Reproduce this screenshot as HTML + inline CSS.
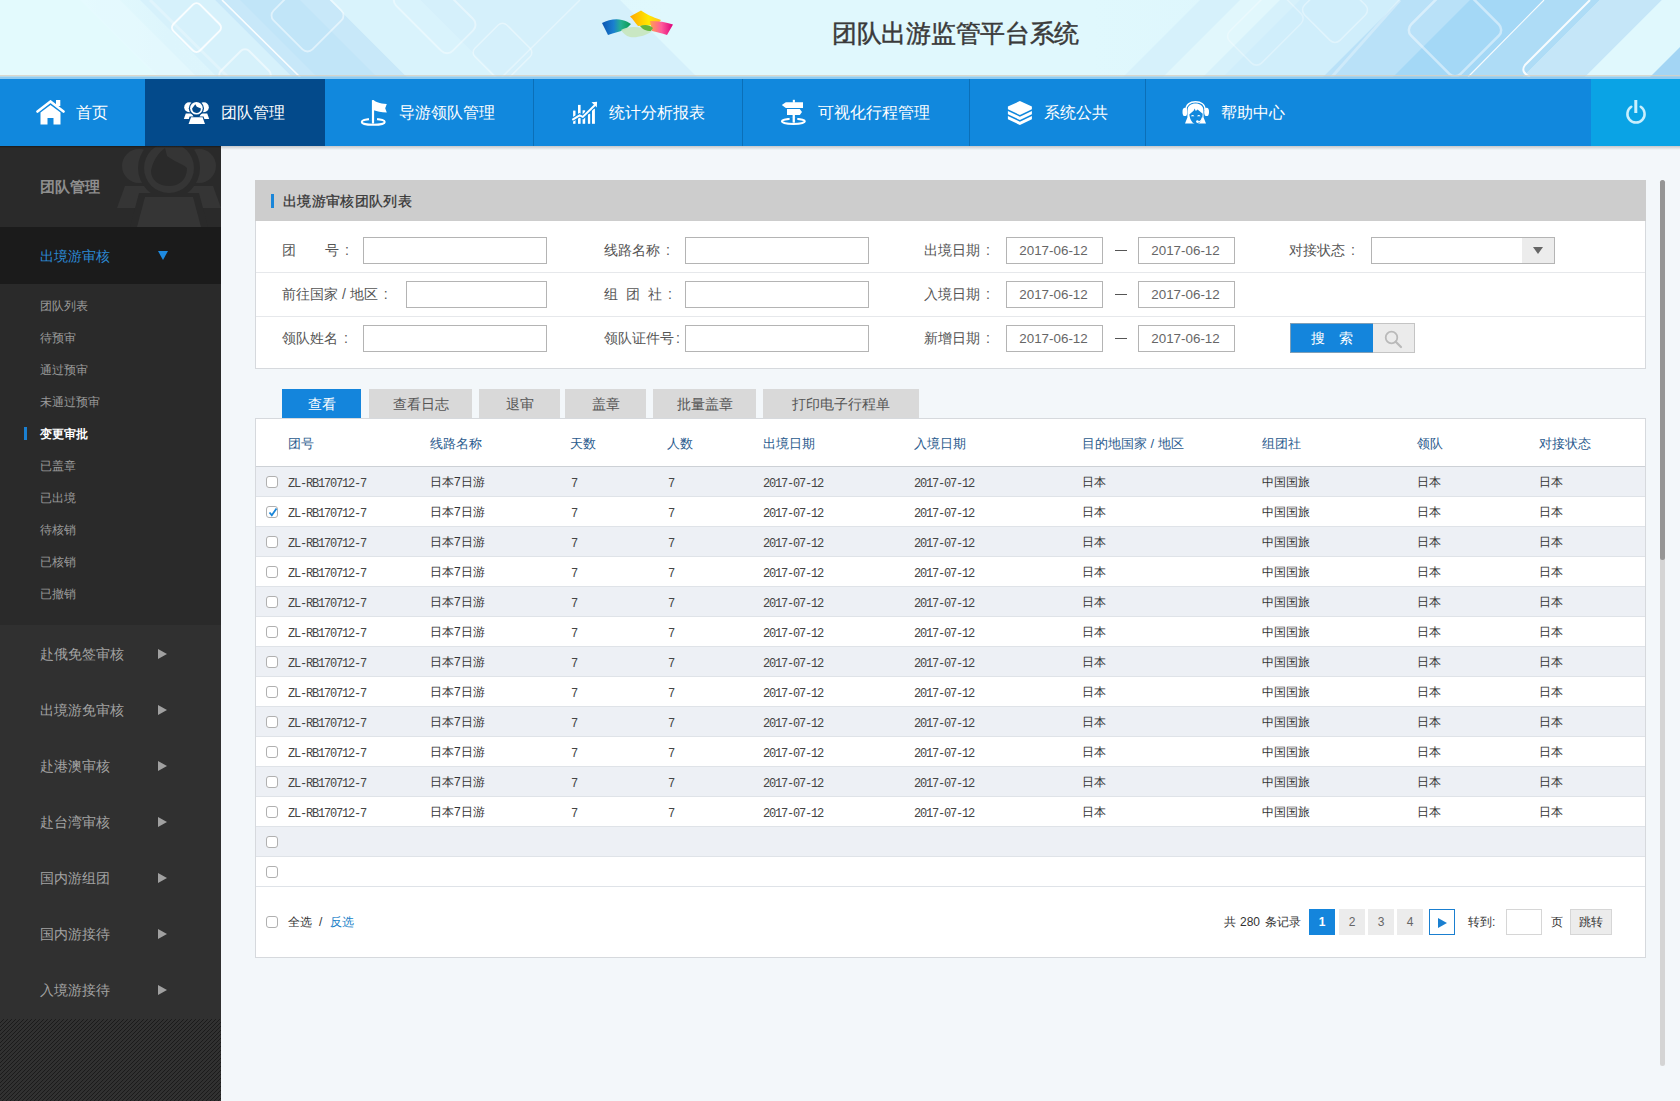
<!DOCTYPE html>
<html><head><meta charset="utf-8">
<style>
*{box-sizing:border-box;margin:0;padding:0}
html,body{width:1680px;height:1101px;overflow:hidden}
body{position:relative;background:#f3f7fa;font-family:"Liberation Sans",sans-serif;color:#555}
.a{position:absolute}
#hdr{left:0;top:0;width:1680px;height:79px;overflow:hidden;background:#e2f8fd}
#nav{left:0;top:79px;width:1680px;height:67px;background:#1188dd;z-index:2}
.ni{position:absolute;top:0;height:67px;color:#fff;font-size:16px;line-height:67px}
.ni .t{position:absolute;top:0;white-space:nowrap}
.sep{position:absolute;top:0;width:1px;height:67px;background:#0b6fb8}
#side{left:0;top:146px;width:221px;height:955px;background:#303030;overflow:hidden}
.sg{position:absolute;left:40px;font-size:14px;color:#a3a3a3;white-space:nowrap}
.tri{position:absolute;left:158px;width:0;height:0;border-top:5px solid transparent;border-bottom:5px solid transparent;border-left:9px solid #a0a0a0}
.si{position:absolute;left:40px;font-size:12px;color:#9a9a9a;white-space:nowrap;line-height:16px}
#panel{left:255px;top:180px;width:1391px;height:189px;background:#fff;box-shadow:inset 1px 0 0 #d6d9dd,inset -1px 0 0 #d6d9dd,inset 0 -1px 0 #d6d9dd}
.lbl{position:absolute;font-size:14px;color:#555;white-space:nowrap;line-height:16px}
.inp{position:absolute;height:27px;border:1px solid #b4b4b4;background:#fff}
.dt{position:absolute;height:27px;width:97px;border:1px solid #b4b4b4;background:#fff;font-size:13.4px;color:#666;text-align:center;line-height:25px;text-indent:-2px}
.tab{position:absolute;top:389px;height:29px;background:#d9d9d9;color:#555;font-size:14px;text-align:center;line-height:30px}
#tbl{left:255px;top:418px;width:1391px;height:540px;background:#fff;border:1px solid #d6d9dd}
.th{position:absolute;top:17px;font-size:13px;color:#2b5b8e;white-space:nowrap;line-height:16px}
.row{position:absolute;left:0;width:1389px;height:30px;border-bottom:1px solid #dfe3e8}
.row.g{background:#edf0f5}
.cb{position:absolute;left:10px;top:9px;width:12px;height:12px;border:1px solid #b0b0b0;border-radius:3px;background:#fff}
.c{position:absolute;top:0;line-height:30px;font-size:12px;color:#333;white-space:nowrap}
.pg{width:26px;height:26px;background:#ececec;color:#666;font-size:12px;line-height:26px;text-align:center}
.m{font-family:"Liberation Mono",monospace;font-size:12px;letter-spacing:-1.2px;color:#444}
.c.m{top:2px}
</style></head><body>

<div id="hdr" class="a">
<svg class="a" style="left:0;top:0" width="1680" height="79" viewBox="0 0 1680 79">
<defs><linearGradient id="hbg" x1="0" y1="0" x2="1" y2="0"><stop offset="0" stop-color="#e3fafd"/><stop offset="0.05" stop-color="#e3fafd"/><stop offset="0.1" stop-color="#ddf5fc"/><stop offset="0.4" stop-color="#e0f8fd"/><stop offset="0.65" stop-color="#e0f8fd"/><stop offset="0.8" stop-color="#dcf5fc"/><stop offset="1" stop-color="#dcf5fc"/></linearGradient></defs><rect width="1680" height="79" fill="url(#hbg)"/>
<!-- left bands (\ direction) -->
<polygon points="0,0 82,0 161,79 0,79" fill="#e3fafd"/>
<polygon points="140,0 215,0 294,79 219,79" fill="#d6f1fb"/>
<polygon points="215,0 330,0 409,79 294,79" fill="#c8e8f9"/>
<polygon points="240,0 300,0 379,79 319,79" fill="#bfe3f8" opacity="0.8"/>
<polygon points="330,0 420,0 499,79 409,79" fill="#d9f3fc"/>
<polygon points="420,0 620,0 699,79 499,79" fill="#d5f0fb"/>
<polygon points="80,0 120,0 199,79 159,79" fill="#e6fafd" opacity="0.7"/>
<line x1="222" y1="0" x2="302" y2="79" stroke="#fff" stroke-width="1.6" opacity="0.9"/>
<line x1="150" y1="0" x2="230" y2="79" stroke="#fff" stroke-width="3" opacity="0.25"/>
<rect x="177.8" y="8.8" width="37.5" height="37.5" rx="5" transform="rotate(45 196.5 27.5)" fill="none" stroke="#fff" stroke-width="2" opacity="0.85"/>
<rect x="280" y="-12" width="55" height="55" rx="7" transform="rotate(45 307.5 15.5)" fill="none" stroke="#fff" stroke-width="1.8" opacity="0.5"/>
<rect x="225" y="55" width="40" height="40" rx="6" transform="rotate(45 245 75)" fill="none" stroke="#fff" stroke-width="2" opacity="0.5"/>
<rect x="395" y="-10" width="80" height="45" rx="8" transform="rotate(45 435 12)" fill="none" stroke="#fff" stroke-width="2" opacity="0.4"/>
<rect x="480" y="30" width="45" height="45" rx="6" transform="rotate(45 502.5 52.5)" fill="none" stroke="#fff" stroke-width="1.5" opacity="0.4"/>
<line x1="580" y1="0" x2="500" y2="79" stroke="#fff" stroke-width="1.5" opacity="0.35"/>
<!-- right bands (/ direction) -->
<polygon points="1200,0 1662,0 1583,79 1121,79" fill="#d6f1fb"/>
<polygon points="1300,0 1400,0 1321,79 1221,79" fill="#d0eefb"/>
<polygon points="1400,0 1560,0 1481,79 1321,79" fill="#b9e1f8"/>
<polygon points="1470,0 1545,0 1466,79 1391,79" fill="#a4d8f6"/>
<polygon points="1545,0 1600,0 1521,79 1466,79" fill="#aedcf6"/>
<polygon points="1600,0 1662,0 1583,79 1521,79" fill="#c5e6f8"/>
<polygon points="1662,0 1680,0 1680,79 1583,79" fill="#e0f8fd"/>
<polygon points="1680,47 1680,79 1648,79" fill="#a3d5f4"/>
<polygon points="1240,0 1280,0 1201,79 1161,79" fill="#e4f9fd" opacity="0.8"/>
<line x1="1544" y1="0" x2="1468" y2="77" stroke="#fff" stroke-width="1.2" opacity="0.9"/>
<path d="M1590,0 L1525,65 Q1520,72 1530,77" fill="none" stroke="#fff" stroke-width="2" opacity="0.9"/>
<rect x="1420" y="-5" width="70" height="70" rx="8" transform="rotate(45 1455 30)" fill="none" stroke="#fff" stroke-width="2.5" opacity="0.45"/>
<rect x="1310" y="-15" width="50" height="50" rx="7" transform="rotate(45 1335 10)" fill="none" stroke="#fff" stroke-width="1.6" opacity="0.35"/>
<rect x="1230" y="5" width="70" height="45" rx="7" transform="rotate(-45 1265 27)" fill="none" stroke="#fff" stroke-width="1.6" opacity="0.3"/>
<line x1="1400" y1="0" x2="1330" y2="79" stroke="#fff" stroke-width="3" opacity="0.3"/>
<!-- bottom line -->
<rect x="0" y="75" width="1680" height="1.5" fill="#d8d0c0" opacity="0.8"/>
<rect x="0" y="76.5" width="1680" height="2.5" fill="#8ecbf2"/>
</svg>
<svg class="a" style="left:590px;top:5px" width="100" height="40" viewBox="0 0 100 40">
<defs>
<linearGradient id="lg1" x1="12" y1="0" x2="41" y2="0" gradientUnits="userSpaceOnUse"><stop offset="0" stop-color="#0b55b0"/><stop offset="0.4" stop-color="#1a7fd0"/><stop offset="0.65" stop-color="#25b090"/><stop offset="1" stop-color="#0a9a50"/></linearGradient>
<linearGradient id="lg2" x1="40" y1="0" x2="71" y2="0" gradientUnits="userSpaceOnUse"><stop offset="0" stop-color="#ffa800"/><stop offset="0.6" stop-color="#ffe800"/><stop offset="1" stop-color="#ffc020"/></linearGradient>
<linearGradient id="lg3" x1="60" y1="0" x2="83" y2="0" gradientUnits="userSpaceOnUse"><stop offset="0" stop-color="#ffa050"/><stop offset="0.5" stop-color="#ff5a9a"/><stop offset="1" stop-color="#dc007a"/></linearGradient>
</defs>
<path d="M40,11.5 L51,5.5 C56,9 62,12 71,15 L67,20 C60,20 54,21 48,21 C45,18 43,14 40,11.5 Z" fill="url(#lg2)"/>
<path d="M60,16 C68,16 76,17 83,19.5 L77,30 C72,28 66,27 62,26 Z" fill="url(#lg3)"/>
<path d="M12,18 C18,15 26,13 32,15 C36,16 39,17.5 41,19 L35,25 C30,26 24,28 18,30 C16,26 14,22 12,18 Z" fill="url(#lg1)"/>
<path d="M31,25 C38,21 50,21 62,26 C56,31 46,33 40,32 C36,31 33,28 31,25 Z" fill="#c8e6c0" opacity="0.95"/>
<path d="M50,21 C55,19 60,20 63,23 L61,26 C56,26 52,24 50,21 Z" fill="#62b53a"/>
</svg>
<div class="a" style="left:832px;top:18px;font-size:25px;line-height:30px;color:#3a3a3a;white-space:nowrap;letter-spacing:-0.3px;-webkit-text-stroke:0.45px #3a3a3a">团队出游监管平台系统</div>
</div>

<div id="nav" class="a">
<div class="a" style="left:145px;top:0;width:180px;height:67px;background:#034a8b"></div>
<div class="a" style="left:1591px;top:0;width:89px;height:67px;background:#0aa3e5"></div>
<div class="sep" style="left:533px"></div>
<div class="sep" style="left:742px"></div>
<div class="sep" style="left:969px"></div>
<div class="sep" style="left:1145px"></div>
<!-- home -->
<svg class="a" style="left:36px;top:21px" width="30" height="26" viewBox="0 0 30 26">
<path d="M1.5,11.5 L14.5,1.5 L27.5,11.5" fill="none" stroke="#fff" stroke-width="2.6" stroke-linecap="round" stroke-linejoin="miter"/>
<rect x="20" y="0" width="4.3" height="6" fill="#fff"/>
<path d="M4.5,12.5 L14.5,5 L24.5,12.5 L24.5,24.5 L17.5,24.5 L17.5,18 L11.5,18 L11.5,24.5 L4.5,24.5 Z" fill="#fff"/>
</svg>
<div class="ni t" style="left:76px;top:0">首页</div>
<!-- team -->
<svg class="a" style="left:183px;top:23px" width="28" height="23" viewBox="0 0 28 23">
<circle cx="6.2" cy="5.3" r="5" fill="#fff"/>
<circle cx="20.8" cy="5.3" r="5" fill="#fff"/>
<path d="M2.8,11.6 L9.2,11.6 L11.2,17 L0.8,17 Z" fill="#fff"/>
<path d="M17.8,11.6 L24.2,11.6 L26.2,17 L15.8,17 Z" fill="#fff"/>
<circle cx="13.4" cy="6.3" r="7.6" fill="#034a8b"/>
<circle cx="13.4" cy="6.3" r="6.3" fill="#fff"/>
<path d="M9.1,6.6 L12.3,2.3 L13.8,4.8 C15.5,5.6 16.8,6 17.9,6.4 C17.9,9.3 16,10.9 13.5,10.9 C11,10.9 9.1,9.3 9.1,6.6 Z" fill="#034a8b"/>
<path d="M6.6,14.4 L20.6,14.4 L23,22.6 L4.2,22.6 Z" fill="#034a8b"/>
<path d="M8,15.3 L19.6,15.3 L22,22 L5.6,22 Z" fill="#fff"/>
</svg>
<div class="ni t" style="left:221px;top:0">团队管理</div>
<!-- flag -->
<svg class="a" style="left:359px;top:20px" width="30" height="28" viewBox="0 0 30 28">
<ellipse cx="14.25" cy="22.9" rx="11.5" ry="2.9" fill="none" stroke="#fff" stroke-width="2"/>
<rect x="10" y="19" width="8" height="2.6" fill="#1188dd"/>
<rect x="12.9" y="1.1" width="2.2" height="23.5" fill="#fff"/>
<path d="M14.8,1.3 C17,3.2 20,4.5 27.8,4.9 L26.2,9.3 L27.8,13.6 C22,13.2 18,12.6 14.8,11.3 Z" fill="#fff"/>
</svg>
<div class="ni t" style="left:399px;top:0">导游领队管理</div>
<!-- chart -->
<svg class="a" style="left:571px;top:22px" width="28" height="24" viewBox="0 0 28 24">
<rect x="2.1" y="9.6" width="2.4" height="13.2" fill="#fff"/>
<rect x="7" y="3.9" width="2.6" height="18.9" fill="#fff"/>
<rect x="11.6" y="9.3" width="2.6" height="13.5" fill="#fff"/>
<rect x="16.9" y="12.8" width="2.3" height="10" fill="#fff"/>
<rect x="21" y="7.7" width="2.9" height="15.1" fill="#fff"/>
<path d="M1.3,18.8 L8.6,14.3 L11.8,15.9 L24,4" fill="none" stroke="#1188dd" stroke-width="4.2"/>
<path d="M1.3,18.8 L8.6,14.3 L11.8,15.9 L24,4" fill="none" stroke="#fff" stroke-width="2"/>
<path d="M20.5,1.3 L26.1,0.8 L25.8,6.4 Z" fill="#fff"/>
</svg>
<div class="ni t" style="left:609px;top:0">统计分析报表</div>
<!-- signpost -->
<svg class="a" style="left:779px;top:20px" width="30" height="28" viewBox="0 0 30 28">
<ellipse cx="14.35" cy="22.3" rx="11.5" ry="2.6" fill="none" stroke="#fff" stroke-width="2"/>
<rect x="10.6" y="18.5" width="7.7" height="2.6" fill="#1188dd"/>
<rect x="13.8" y="0.8" width="2.1" height="3" fill="#fff"/>
<path d="M2.8,6.05 L6.8,3.2 L24,3.2 L24,8.9 L6.8,8.9 Z" fill="#fff"/>
<path d="M8,10.1 L20.8,10.1 L23,13 L20.8,15.9 L8,15.9 Z" fill="#fff"/>
<rect x="13.6" y="15.5" width="2.3" height="8.2" fill="#fff"/>
</svg>
<div class="ni t" style="left:818px;top:0">可视化行程管理</div>
<!-- layers -->
<svg class="a" style="left:1007px;top:22px" width="26" height="25" viewBox="0 0 26 25">
<path d="M12.9,0 L24.9,5.6 L24.9,8.3 L12.9,14 L0.9,8.3 L0.9,5.6 Z" fill="#fff"/>
<path d="M0.9,10 L12.9,15.7 L24.9,10 L24.9,13.3 L12.9,19 L0.9,13.3 Z" fill="#fff"/>
<path d="M0.9,15 L12.9,20.7 L24.9,15 L24.9,18.3 L12.9,24 L0.9,18.3 Z" fill="#fff"/>
</svg>
<div class="ni t" style="left:1044px;top:0">系统公共</div>
<!-- headset -->
<svg class="a" style="left:1181px;top:22px" width="29" height="25" viewBox="0 0 29 25">
<path d="M4.9,9 C4.9,3.5 9,0.8 14.5,0.8 C20,0.8 24.1,3.5 24.1,9" fill="none" stroke="#fff" stroke-width="1.5"/>
<ellipse cx="3.9" cy="10.9" rx="2.4" ry="4.2" fill="#fff"/>
<ellipse cx="25.6" cy="10.9" rx="2.4" ry="4.2" fill="#fff"/>
<path d="M6.6,9.5 C6.6,4.8 10,2.6 14.5,2.6 C19,2.6 22.4,4.8 22.4,9.5 L22.6,16.5 L25,22.6 L4,22.6 L6.4,16.5 Z" fill="#fff"/>
<path d="M8.3,13.4 L12.8,9.6 L13.6,7.6 L14.8,9.9 L16.6,8.5 L21.7,12.7 L21.4,16 C20.8,19.8 18.5,22.6 15,23.3 C11.5,22.6 9.2,19.2 8.3,13.4 Z" fill="#1188dd"/>
<path d="M9.8,15.2 Q11.6,12.8 13.4,15.2 Z M16,15.2 Q17.8,12.8 19.6,15.2 Z" fill="#fff"/>
<path d="M21.3,16.5 C20.8,19.5 19,21 16.4,21" fill="none" stroke="#fff" stroke-width="1.3"/>
<circle cx="16.4" cy="20.6" r="1.3" fill="#fff"/>
</svg>
<div class="ni t" style="left:1221px;top:0">帮助中心</div>
<!-- power -->
<svg class="a" style="left:1624px;top:19px" width="24" height="30" viewBox="0 0 24 30">
<path d="M7.3,8.8 A8.6,8.6 0 1 0 16.7,8.8" fill="none" stroke="#c9effd" stroke-width="2.5" stroke-linecap="round"/>
<rect x="10.3" y="2" width="3" height="13" fill="#c9effd"/>
</svg>
<div class="a" style="left:221px;top:67px;width:1459px;height:4px;background:linear-gradient(#c6c8cb,rgba(243,247,250,0))"></div><div class="a" style="left:0;top:67px;width:221px;height:2px;background:linear-gradient(#1a1a1a,rgba(30,30,30,0))"></div>
</div>

<div id="side" class="a">
<div class="a" style="left:0;top:0;width:221px;height:81px;background:#2a2a2a;overflow:hidden">
<svg class="a" style="left:117px;top:0" width="104" height="81" viewBox="0 0 104 81">
<circle cx="22" cy="20" r="17" fill="#353535"/>
<circle cx="82" cy="20" r="17" fill="#353535"/>
<path d="M8,40 L38,40 L46,62 L0,62 Z" fill="#353535"/>
<path d="M66,40 L96,40 L104,62 L58,62 Z" fill="#353535"/>
<circle cx="52" cy="22" r="31" fill="#2a2a2a"/>
<circle cx="52" cy="22" r="25" fill="#353535"/>
<path d="M34,25 C36,14 42,6 48,2 L50,10 C58,16 66,18 70,22 C70,34 62,40 52,40 C42,40 34,34 34,25 Z" fill="#2a2a2a"/>
<path d="M22,47 L82,47 L91,81 L13,81 Z" fill="#2a2a2a"/>
<path d="M28,51 L76,51 L84,81 L20,81 Z" fill="#353535"/>
</svg>
<div class="a" style="left:40px;top:32px;font-size:15px;line-height:18px;color:#8e8e8e;font-weight:bold;white-space:nowrap">团队管理</div>
</div>
<div class="a" style="left:0;top:81px;width:221px;height:57px;background:#1b1b1b">
<div class="a" style="left:40px;top:20px;font-size:14px;line-height:18px;color:#2b8ad6;white-space:nowrap">出境游审核</div>
<div class="a" style="left:158px;top:24px;width:0;height:0;border-left:5px solid transparent;border-right:5px solid transparent;border-top:9px solid #1e8ae0"></div>
</div>
<div class="a" style="left:0;top:138px;width:221px;height:341px;background:#2a2a2a">
</div>
<div class="si" style="top:152px">团队列表</div>
<div class="si" style="top:184px">待预审</div>
<div class="si" style="top:216px">通过预审</div>
<div class="si" style="top:248px">未通过预审</div>
<div class="a" style="left:24px;top:281px;width:3px;height:13px;background:#1a7fd0"></div><div class="si" style="top:280px;color:#fff;font-weight:bold">变更审批</div>
<div class="si" style="top:312px">已盖章</div>
<div class="si" style="top:344px">已出境</div>
<div class="si" style="top:376px">待核销</div>
<div class="si" style="top:408px">已核销</div>
<div class="si" style="top:440px">已撤销</div>

<div class="sg" style="top:499px;line-height:18px">赴俄免签审核</div><div class="tri" style="top:503px"></div>
<div class="sg" style="top:555px;line-height:18px">出境游免审核</div><div class="tri" style="top:559px"></div>
<div class="sg" style="top:611px;line-height:18px">赴港澳审核</div><div class="tri" style="top:615px"></div>
<div class="sg" style="top:667px;line-height:18px">赴台湾审核</div><div class="tri" style="top:671px"></div>
<div class="sg" style="top:723px;line-height:18px">国内游组团</div><div class="tri" style="top:727px"></div>
<div class="sg" style="top:779px;line-height:18px">国内游接待</div><div class="tri" style="top:783px"></div>
<div class="sg" style="top:835px;line-height:18px">入境游接待</div><div class="tri" style="top:839px"></div>

<svg class="a" style="left:0;top:873px" width="221" height="82"><defs><pattern id="stp" width="4" height="4" patternUnits="userSpaceOnUse"><rect width="4" height="4" fill="#313131"/><rect x="3" y="0" width="1" height="1" fill="#1b1b1b"/><rect x="2" y="1" width="1" height="1" fill="#1b1b1b"/><rect x="1" y="2" width="1" height="1" fill="#1b1b1b"/><rect x="0" y="3" width="1" height="1" fill="#1b1b1b"/></pattern></defs><rect width="221" height="82" fill="url(#stp)" shape-rendering="crispEdges"/></svg>
</div>

<div id="panel" class="a">
<div class="a" style="left:0;top:0;width:1391px;height:41px;background:#cdcdcd"></div>
<div class="a" style="left:16px;top:14px;width:3px;height:14px;background:#1a86d9"></div>
<div class="a" style="left:28px;top:13px;font-size:14px;line-height:16px;color:#333;white-space:nowrap;letter-spacing:0.35px;-webkit-text-stroke:0.25px #333">出境游审核团队列表</div>
<div class="a" style="left:1px;top:92px;width:1389px;height:1px;background:#e6e8eb"></div>
<div class="a" style="left:1px;top:136px;width:1389px;height:1px;background:#e6e8eb"></div>
<div class="lbl" style="left:27px;top:62px;">团<span style="display:inline-block;width:29px"></span>号<span style="margin-left:6px">:</span></div>
<div class="inp" style="left:108px;top:57px;width:184px;height:27px"></div>
<div class="lbl" style="left:349px;top:62px;">线路名称<span style="margin-left:6px">:</span></div>
<div class="inp" style="left:430px;top:57px;width:184px;height:27px"></div>
<div class="lbl" style="left:669px;top:62px;">出境日期<span style="margin-left:6px">:</span></div>
<div class="dt" style="left:751px;top:57px">2017-06-12</div>
<div class="dt" style="left:883px;top:57px">2017-06-12</div>
<div class="a" style="left:860px;top:70px;width:12px;height:1px;background:#555"></div>
<div class="lbl" style="left:1034px;top:62px;">对接状态<span style="margin-left:6px">:</span></div>
<div class="inp" style="left:1116px;top:57px;width:184px;height:27px"></div>
<div class="a" style="left:1267px;top:58px;width:32px;height:25px;background:#ececec"></div>
<div class="a" style="left:1278px;top:67px;width:0;height:0;border-left:5px solid transparent;border-right:5px solid transparent;border-top:7px solid #666"></div>
<div class="lbl" style="left:27px;top:106px;">前往国家 / 地区<span style="margin-left:6px">:</span></div>
<div class="inp" style="left:151px;top:101px;width:141px;height:27px"></div>
<div class="lbl" style="left:349px;top:106px;">组<span style="display:inline-block;width:8px"></span>团<span style="display:inline-block;width:8px"></span>社<span style="margin-left:6px">:</span></div>
<div class="inp" style="left:430px;top:101px;width:184px;height:27px"></div>
<div class="lbl" style="left:669px;top:106px;">入境日期<span style="margin-left:6px">:</span></div>
<div class="dt" style="left:751px;top:101px">2017-06-12</div>
<div class="dt" style="left:883px;top:101px">2017-06-12</div>
<div class="a" style="left:860px;top:114px;width:12px;height:1px;background:#555"></div>
<div class="lbl" style="left:27px;top:150px;">领队姓名<span style="margin-left:6px">:</span></div>
<div class="inp" style="left:108px;top:145px;width:184px;height:27px"></div>
<div class="lbl" style="left:349px;top:150px;">领队证件号<span style="margin-left:2px">:</span></div>
<div class="inp" style="left:430px;top:145px;width:184px;height:27px"></div>
<div class="lbl" style="left:669px;top:150px;">新增日期<span style="margin-left:6px">:</span></div>
<div class="dt" style="left:751px;top:145px">2017-06-12</div>
<div class="dt" style="left:883px;top:145px">2017-06-12</div>
<div class="a" style="left:860px;top:158px;width:12px;height:1px;background:#555"></div>
<div class="a" style="left:1035px;top:143px;width:83px;height:30px;background:#1485dc;border:1px solid #7f9fb8;border-right:none;color:#fff;font-size:14px;line-height:28px;text-align:center;letter-spacing:0">搜<span style="display:inline-block;width:14px"></span>索</div>
<div class="a" style="left:1118px;top:143px;width:42px;height:30px;background:#ebebeb;border:1px solid #c4c4c4;border-left:none"></div>
<svg class="a" style="left:1129px;top:150px" width="20" height="20" viewBox="0 0 20 20"><circle cx="7.5" cy="7.5" r="5.8" fill="none" stroke="#b9b9b9" stroke-width="1.8"/><path d="M11.7,11.7 L17,17" stroke="#b9b9b9" stroke-width="2.2" stroke-linecap="round"/></svg>
</div>

<div class="tab" style="left:282px;width:79px;background:#1485dc;color:#fff">查看</div>
<div class="tab" style="left:369px;width:103px;">查看日志</div>
<div class="tab" style="left:479px;width:81px;">退审</div>
<div class="tab" style="left:565px;width:81px;">盖章</div>
<div class="tab" style="left:653px;width:103px;">批量盖章</div>
<div class="tab" style="left:763px;width:156px;">打印电子行程单</div>
<div id="tbl" class="a">
<div class="th" style="left:32px">团号</div>
<div class="th" style="left:174px">线路名称</div>
<div class="th" style="left:314px">天数</div>
<div class="th" style="left:411px">人数</div>
<div class="th" style="left:507px">出境日期</div>
<div class="th" style="left:658px">入境日期</div>
<div class="th" style="left:826px">目的地国家 / 地区</div>
<div class="th" style="left:1006px">组团社</div>
<div class="th" style="left:1161px">领队</div>
<div class="th" style="left:1283px">对接状态</div>
<div class="a" style="left:0;top:47px;width:1389px;height:1px;background:#cdd1d6"></div>
<div class="row g" style="top:48px"><div class="cb"></div><div class="c m" style="left:32px">ZL-RB170712-7</div><div class="c " style="left:174px">日本7日游</div><div class="c m" style="left:315px">7</div><div class="c m" style="left:412px">7</div><div class="c m" style="left:507px">2017-07-12</div><div class="c m" style="left:658px">2017-07-12</div><div class="c " style="left:826px">日本</div><div class="c " style="left:1006px">中国国旅</div><div class="c " style="left:1161px">日本</div><div class="c " style="left:1283px">日本</div></div>
<div class="row" style="top:78px"><div class="cb"><svg class="a" style="left:1px;top:0" width="10" height="10" viewBox="0 0 10 10"><path d="M1.5,5.5 L3.8,8.2 L8.5,1.5" fill="none" stroke="#1a86d9" stroke-width="1.8"/></svg></div><div class="c m" style="left:32px">ZL-RB170712-7</div><div class="c " style="left:174px">日本7日游</div><div class="c m" style="left:315px">7</div><div class="c m" style="left:412px">7</div><div class="c m" style="left:507px">2017-07-12</div><div class="c m" style="left:658px">2017-07-12</div><div class="c " style="left:826px">日本</div><div class="c " style="left:1006px">中国国旅</div><div class="c " style="left:1161px">日本</div><div class="c " style="left:1283px">日本</div></div>
<div class="row g" style="top:108px"><div class="cb"></div><div class="c m" style="left:32px">ZL-RB170712-7</div><div class="c " style="left:174px">日本7日游</div><div class="c m" style="left:315px">7</div><div class="c m" style="left:412px">7</div><div class="c m" style="left:507px">2017-07-12</div><div class="c m" style="left:658px">2017-07-12</div><div class="c " style="left:826px">日本</div><div class="c " style="left:1006px">中国国旅</div><div class="c " style="left:1161px">日本</div><div class="c " style="left:1283px">日本</div></div>
<div class="row" style="top:138px"><div class="cb"></div><div class="c m" style="left:32px">ZL-RB170712-7</div><div class="c " style="left:174px">日本7日游</div><div class="c m" style="left:315px">7</div><div class="c m" style="left:412px">7</div><div class="c m" style="left:507px">2017-07-12</div><div class="c m" style="left:658px">2017-07-12</div><div class="c " style="left:826px">日本</div><div class="c " style="left:1006px">中国国旅</div><div class="c " style="left:1161px">日本</div><div class="c " style="left:1283px">日本</div></div>
<div class="row g" style="top:168px"><div class="cb"></div><div class="c m" style="left:32px">ZL-RB170712-7</div><div class="c " style="left:174px">日本7日游</div><div class="c m" style="left:315px">7</div><div class="c m" style="left:412px">7</div><div class="c m" style="left:507px">2017-07-12</div><div class="c m" style="left:658px">2017-07-12</div><div class="c " style="left:826px">日本</div><div class="c " style="left:1006px">中国国旅</div><div class="c " style="left:1161px">日本</div><div class="c " style="left:1283px">日本</div></div>
<div class="row" style="top:198px"><div class="cb"></div><div class="c m" style="left:32px">ZL-RB170712-7</div><div class="c " style="left:174px">日本7日游</div><div class="c m" style="left:315px">7</div><div class="c m" style="left:412px">7</div><div class="c m" style="left:507px">2017-07-12</div><div class="c m" style="left:658px">2017-07-12</div><div class="c " style="left:826px">日本</div><div class="c " style="left:1006px">中国国旅</div><div class="c " style="left:1161px">日本</div><div class="c " style="left:1283px">日本</div></div>
<div class="row g" style="top:228px"><div class="cb"></div><div class="c m" style="left:32px">ZL-RB170712-7</div><div class="c " style="left:174px">日本7日游</div><div class="c m" style="left:315px">7</div><div class="c m" style="left:412px">7</div><div class="c m" style="left:507px">2017-07-12</div><div class="c m" style="left:658px">2017-07-12</div><div class="c " style="left:826px">日本</div><div class="c " style="left:1006px">中国国旅</div><div class="c " style="left:1161px">日本</div><div class="c " style="left:1283px">日本</div></div>
<div class="row" style="top:258px"><div class="cb"></div><div class="c m" style="left:32px">ZL-RB170712-7</div><div class="c " style="left:174px">日本7日游</div><div class="c m" style="left:315px">7</div><div class="c m" style="left:412px">7</div><div class="c m" style="left:507px">2017-07-12</div><div class="c m" style="left:658px">2017-07-12</div><div class="c " style="left:826px">日本</div><div class="c " style="left:1006px">中国国旅</div><div class="c " style="left:1161px">日本</div><div class="c " style="left:1283px">日本</div></div>
<div class="row g" style="top:288px"><div class="cb"></div><div class="c m" style="left:32px">ZL-RB170712-7</div><div class="c " style="left:174px">日本7日游</div><div class="c m" style="left:315px">7</div><div class="c m" style="left:412px">7</div><div class="c m" style="left:507px">2017-07-12</div><div class="c m" style="left:658px">2017-07-12</div><div class="c " style="left:826px">日本</div><div class="c " style="left:1006px">中国国旅</div><div class="c " style="left:1161px">日本</div><div class="c " style="left:1283px">日本</div></div>
<div class="row" style="top:318px"><div class="cb"></div><div class="c m" style="left:32px">ZL-RB170712-7</div><div class="c " style="left:174px">日本7日游</div><div class="c m" style="left:315px">7</div><div class="c m" style="left:412px">7</div><div class="c m" style="left:507px">2017-07-12</div><div class="c m" style="left:658px">2017-07-12</div><div class="c " style="left:826px">日本</div><div class="c " style="left:1006px">中国国旅</div><div class="c " style="left:1161px">日本</div><div class="c " style="left:1283px">日本</div></div>
<div class="row g" style="top:348px"><div class="cb"></div><div class="c m" style="left:32px">ZL-RB170712-7</div><div class="c " style="left:174px">日本7日游</div><div class="c m" style="left:315px">7</div><div class="c m" style="left:412px">7</div><div class="c m" style="left:507px">2017-07-12</div><div class="c m" style="left:658px">2017-07-12</div><div class="c " style="left:826px">日本</div><div class="c " style="left:1006px">中国国旅</div><div class="c " style="left:1161px">日本</div><div class="c " style="left:1283px">日本</div></div>
<div class="row" style="top:378px"><div class="cb"></div><div class="c m" style="left:32px">ZL-RB170712-7</div><div class="c " style="left:174px">日本7日游</div><div class="c m" style="left:315px">7</div><div class="c m" style="left:412px">7</div><div class="c m" style="left:507px">2017-07-12</div><div class="c m" style="left:658px">2017-07-12</div><div class="c " style="left:826px">日本</div><div class="c " style="left:1006px">中国国旅</div><div class="c " style="left:1161px">日本</div><div class="c " style="left:1283px">日本</div></div>
<div class="row g" style="top:408px"><div class="cb"></div></div>
<div class="row" style="top:438px"><div class="cb"></div></div>
<div class="cb" style="left:10px;top:497px"></div>
<div class="a" style="left:32px;top:495px;font-size:12px;line-height:16px;color:#333;white-space:nowrap">全选</div><div class="a" style="left:63px;top:495px;font-size:12px;line-height:16px;color:#333">/</div><div class="a" style="left:74px;top:495px;font-size:12px;line-height:16px;color:#1a7fc8;white-space:nowrap">反选</div>
<div class="a" style="left:968px;top:495px;font-size:12px;line-height:16px;color:#333;white-space:nowrap">共<span style="margin:0 5px 0 4px">280</span>条记录</div>
<div class="a pg" style="left:1053px;top:490px;background:#1485dc;color:#fff;font-weight:bold">1</div>
<div class="a pg" style="left:1083px;top:490px">2</div>
<div class="a pg" style="left:1112px;top:490px">3</div>
<div class="a pg" style="left:1141px;top:490px">4</div>
<div class="a pg" style="left:1173px;top:490px;background:#fff;border:1px solid #1a7fd0"><div class="a" style="left:8px;top:8px;width:0;height:0;border-top:5px solid transparent;border-bottom:5px solid transparent;border-left:9px solid #1a7fd0"></div></div>
<div class="a" style="left:1212px;top:495px;font-size:12px;line-height:16px;color:#333;white-space:nowrap">转到:</div>
<div class="a" style="left:1250px;top:490px;width:36px;height:26px;border:1px solid #d6d6d6;background:#fff"></div>
<div class="a" style="left:1295px;top:495px;font-size:12px;line-height:16px;color:#333;white-space:nowrap">页</div>
<div class="a" style="left:1314px;top:490px;width:42px;height:26px;border:1px solid #d6d6d6;background:#ececec;font-size:12px;line-height:25px;text-align:center;color:#333">跳转</div>
</div>

<div class="a" style="left:1660px;top:180px;width:5px;height:886px;background:#d4d4d4;border-radius:3px"></div>
<div class="a" style="left:1660px;top:180px;width:5px;height:380px;background:#959595;border-radius:3px"></div>
</body></html>
